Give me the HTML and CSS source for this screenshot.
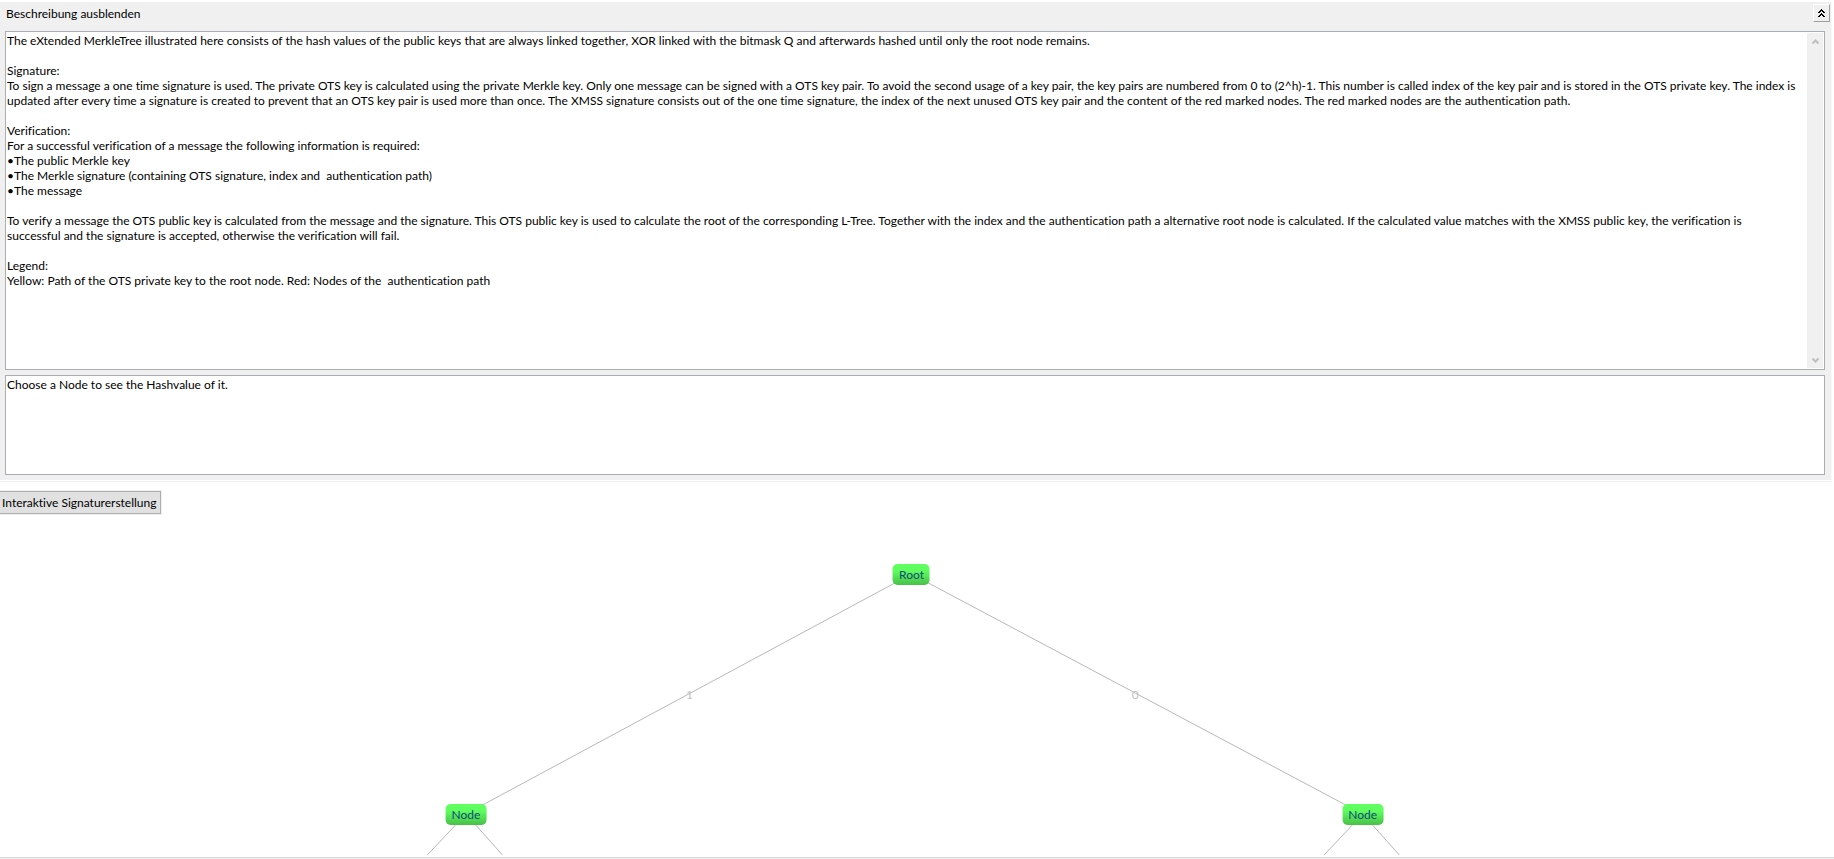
FILE: index.html
```html
<!DOCTYPE html>
<html lang="de">
<head>
<meta charset="utf-8">
<title>XMSS Tree</title>
<link rel="stylesheet" href="styles.css">
</head>
<body>
<section class="panel">
  <header class="panel-header">
    <label for="description">Beschreibung ausblenden</label>
    <button class="collapse" type="button" aria-label="Beschreibung ausblenden">
      <svg width="7" height="8" viewBox="0 0 7 8" shape-rendering="crispEdges"><path d="M3 0h1v1h1v1h1v1h1v1h-2v-1h-1v-1h-1v1h-1v1h-2v-1h1v-1h1v-1h1zM3 4h1v1h1v1h1v1h1v1h-2v-1h-1v-1h-1v1h-1v1h-2v-1h1v-1h1v-1h1z"/></svg>
    </button>
  </header>
  <div class="field">
    <textarea class="text description" id="description" lang="en" readonly>The eXtended MerkleTree illustrated here consists of the hash values of the public keys that are always linked together, XOR linked with the bitmask Q and afterwards hashed until only the root node remains.

Signature:
To sign a message a one time signature is used. The private OTS key is calculated using the private Merkle key. Only one message can be signed with a OTS key pair. To avoid the second usage of a key pair, the key pairs are numbered from 0 to (2^h)-1. This number is called index of the key pair and is stored in the OTS private key. The index is updated after every time a signature is created to prevent that an OTS key pair is used more than once. The XMSS signature consists out of the one time signature, the index of the next unused OTS key pair and the content of the red marked nodes. The red marked nodes are the authentication path.

Verification:
For a successful verification of a message the following information is required:
•The public Merkle key
•The Merkle signature (containing OTS signature, index and  authentication path)
•The message

To verify a message the OTS public key is calculated from the message and the signature. This OTS public key is used to calculate the root of the corresponding L-Tree. Together with the index and the authentication path a alternative root node is calculated. If the calculated value matches with the XMSS public key, the verification is
successful and the signature is accepted, otherwise the verification will fail.

Legend:
Yellow: Path of the OTS private key to the root node. Red: Nodes of the  authentication path</textarea>
    <div class="scrollbar">
      <button class="scroll-button" type="button" aria-label="Nach oben">
        <svg width="7" height="6" viewBox="0 0 7 6"><path d="M0.5 4.5L3.5 1.5L6.5 4.5"/></svg>
      </button>
      <button class="scroll-button" type="button" aria-label="Nach unten">
        <svg width="7" height="6" viewBox="0 0 7 6"><path d="M0.5 1.5L3.5 4.5L6.5 1.5"/></svg>
      </button>
    </div>
  </div>
  <div class="field">
    <textarea class="text hash" aria-label="Hashvalue" lang="en" readonly>Choose a Node to see the Hashvalue of it.</textarea>
  </div>
</section>
<main class="workspace">
  <button class="create" type="button">Interaktive Signaturerstellung</button>
  <div class="tree">
    <svg class="edges" width="100%" height="100%">
      <line x1="49.7%" y1="60" x2="25.4%" y2="300"/>
      <line x1="49.7%" y1="60" x2="74.3%" y2="300"/>
      <line x1="25.4%" y1="300" x2="23.3%" y2="341"/>
      <line x1="25.4%" y1="300" x2="27.4%" y2="341"/>
      <line x1="74.3%" y1="300" x2="72.2%" y2="341"/>
      <line x1="74.3%" y1="300" x2="76.3%" y2="341"/>
      <text x="37.6%" y="185">1</text>
      <text x="61.9%" y="185">0</text>
    </svg>
    <button class="node root" type="button">Root</button>
    <button class="node left" type="button">Node</button>
    <button class="node right" type="button">Node</button>
  </div>
</main>
<footer class="sash"></footer>
</body>
</html>
```
FILE: styles.css
```css
* {
  box-sizing: border-box;
}

body {
  display: flex;
  flex-direction: column;
  min-height: 100vh;
  margin: 0;
  padding-top: 2px;
  background: #fff;
  color: #000;
  font: 12px/15px Lato, sans-serif;
  font-variant-ligatures: none;
}

button,
textarea {
  margin: 0;
  color: inherit;
  font: inherit;
  font-variant-ligatures: none;
}

.panel {
  display: flex;
  flex-direction: column;
  gap: 5px;
  margin-right: 2px;
  padding: 0 1px 5px 5px;
  background: #f0f0f0;
  border-right: 1px solid #f8f8f8;
  border-bottom: 1px solid #fff;
  box-shadow: 0 1px #f0f0f0;
}

.panel-header {
  display: flex;
  align-items: center;
  justify-content: space-between;
  height: 24px;
  padding: 0 0 2px 1px;
}

.collapse {
  display: flex;
  align-items: center;
  justify-content: center;
  width: 17px;
  height: 18px;
  padding: 0;
  background: #f0f0f0;
  border: 1px solid;
  border-color: #fff #a0a0a0 #a0a0a0 #fff;
}

.field {
  display: flex;
  margin-right: 5px;
  background: #fff;
  border: 1px solid #abadb3;
}

.text {
  display: block;
  flex: 1;
  padding: 1px 2px 0 1px;
  background: #fff;
  border: 0;
  outline: 0;
  resize: none;
  overflow: hidden;
}

.description {
  height: 337px;
  padding-right: 0;
}

.hash {
  height: 98px;
}

.scrollbar {
  display: flex;
  flex-direction: column;
  justify-content: space-between;
  width: 16px;
  margin: 1px 1px 1px 0;
  background: #f0f0f0;
}

.scroll-button {
  display: flex;
  align-items: center;
  justify-content: center;
  height: 17px;
  padding: 0;
  background: none;
  border: 0;
}

.scroll-button path {
  fill: none;
  stroke: #bfbfbf;
  stroke-width: 2;
}

.workspace {
  display: flex;
  flex: 1;
  flex-direction: column;
  align-items: flex-start;
  padding-top: 10px;
}

.create {
  padding: 3px 4px 3px 2px;
  background: #e1e1e1;
  border: 1px solid #adadad;
  border-left: 0;
  box-shadow: 0 0 0 1px #f0f0f0;
}

.tree {
  position: relative;
  flex: 1;
  align-self: stretch;
  min-height: 342px;
}

.edges {
  position: absolute;
  inset: 0;
}

.edges line {
  stroke: #b8b8b8;
}

.edges text {
  fill: #c0c0c0;
  text-anchor: middle;
}

.node {
  position: absolute;
  padding: 3px 6px;
  background: linear-gradient(#60ff60 30%, #48c048);
  border: 0;
  border-radius: 5px;
  color: #0f4b78;
  transform: translateX(-50%);
}

.root {
  top: 50px;
  left: 49.7%;
}

.left {
  top: 290px;
  left: 25.4%;
}

.right {
  top: 290px;
  left: 74.3%;
}

.sash {
  height: 2px;
  background: #f0f0f0;
  border-top: 1px solid #d9d9d9;
}
```
